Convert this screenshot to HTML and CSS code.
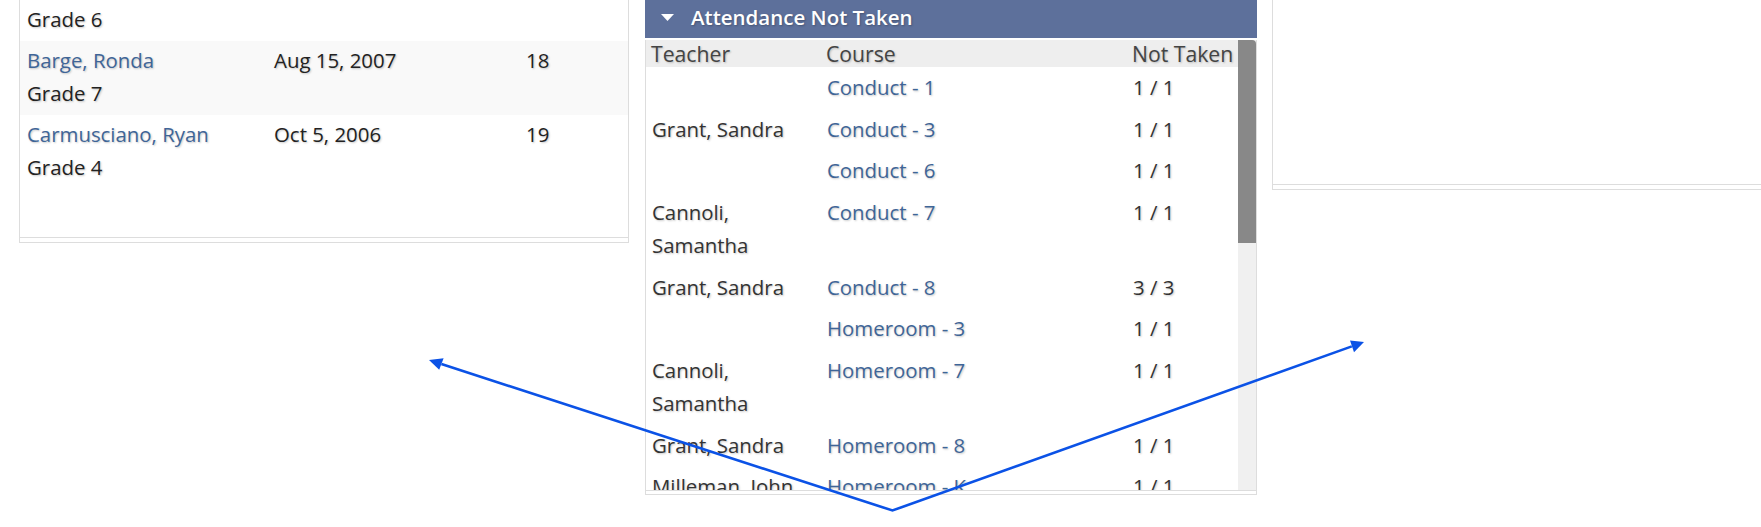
FILE: index.html
```html
<!DOCTYPE html>
<html lang="en">
<head>
<meta charset="utf-8">
<title>Dashboard</title>
<link rel="stylesheet" href="styles.css">
</head>
<body>
<div class="dashboard">
  <section class="panel panel-students">
    <div class="panel-body students-body">
      <table class="list students">
        <colgroup><col class="c-name"><col class="c-date"><col class="c-num"></colgroup>
        <tbody>
          <tr><td><div class="sub">Grade 6</div></td><td></td><td></td></tr>
          <tr class="alt"><td><a href="#" class="link">Barge, Ronda</a><div class="sub">Grade 7</div></td><td>Aug 15, 2007</td><td>18</td></tr>
          <tr><td><a href="#" class="link">Carmusciano, Ryan</a><div class="sub">Grade 4</div></td><td>Oct 5, 2006</td><td>19</td></tr>
        </tbody>
      </table>
    </div>
  </section>

  <section class="panel panel-attendance">
    <header class="panel-head">
      <svg class="caret" width="13" height="7" viewBox="0 0 13 7"><path d="M0 0H13L6.5 7Z" fill="#fff"/></svg>
      <h2 class="panel-title">Attendance Not Taken</h2>
    </header>
    <div class="attendance-frame">
      <div class="scroll-area">
        <div class="scroll-content">
          <table class="list attendance">
            <colgroup><col class="a-teacher"><col class="a-course"><col class="a-count"></colgroup>
            <thead>
              <tr><th>Teacher</th><th>Course</th><th>Not Taken</th></tr>
            </thead>
            <tbody>
              <tr><td></td><td><a href="#" class="link">Conduct - 1</a></td><td>1 / 1</td></tr>
              <tr><td>Grant, Sandra</td><td><a href="#" class="link">Conduct - 3</a></td><td>1 / 1</td></tr>
              <tr><td></td><td><a href="#" class="link">Conduct - 6</a></td><td>1 / 1</td></tr>
              <tr><td>Cannoli, Samantha</td><td><a href="#" class="link">Conduct - 7</a></td><td>1 / 1</td></tr>
              <tr><td>Grant, Sandra</td><td><a href="#" class="link">Conduct - 8</a></td><td>3 / 3</td></tr>
              <tr><td></td><td><a href="#" class="link">Homeroom - 3</a></td><td>1 / 1</td></tr>
              <tr><td>Cannoli, Samantha</td><td><a href="#" class="link">Homeroom - 7</a></td><td>1 / 1</td></tr>
              <tr><td>Grant, Sandra</td><td><a href="#" class="link">Homeroom - 8</a></td><td>1 / 1</td></tr>
              <tr><td>Milleman, John</td><td><a href="#" class="link">Homeroom - K</a></td><td>1 / 1</td></tr>
            </tbody>
          </table>
        </div>
        <div class="scrollbar"><div class="scroll-thumb"></div></div>
      </div>
    </div>
  </section>

  <section class="panel panel-empty">
    <div class="panel-body empty-body"></div>
  </section>
</div>

<svg class="annotations" width="1761" height="527" viewBox="0 0 1761 527">
  <polyline points="441.4,364.0 892.5,510.5 1351.8,346.4" fill="none" stroke="#0b52e6" stroke-width="2.6" stroke-linejoin="miter"/>
  <polygon points="429,360 443.6,358.3 439.2,369.7" fill="#0b52e6"/>
  <polygon points="1364,342 1350,340.6 1354,352.2" fill="#0b52e6"/>
</svg>
</body>
</html>
```

FILE: styles.css
```css
html, body {
  margin: 0;
  padding: 0;
}

body {
  width: 1761px;
  height: 527px;
  overflow: hidden;
  position: relative;
  background: #ffffff;
  font-family: "Open Sans", "Noto Sans", sans-serif;
  font-size: 20.4px;
  color: #222222;
}

.dashboard {
  display: flex;
  align-items: flex-start;
  padding-left: 19px;
}

.panel {
  box-sizing: border-box;
  flex: none;
  background: #fff;
}

/* ---------- left panel ---------- */
.panel-students {
  width: 610px;
  border: 1px solid #dddddd;
  border-top: none;
  padding-bottom: 4px;
}

.students-body {
  height: 237px;
  border-bottom: 1px solid #dddddd;
}

.list {
  border-collapse: collapse;
  table-layout: fixed;
  width: 100%;
}

.list td,
.list th {
  text-align: left;
  vertical-align: top;
  line-height: 33.5px;
  text-shadow: 1px 1px 2px rgba(0, 0, 0, 0.22);
}

.students td {
  padding: 3px 7px 4px;
}

.students .c-name { width: 247px; }
.students .c-date { width: 252px; }
.students .c-num { width: auto; }

.students tr.alt td {
  background: #f9f9f9;
}

.link {
  color: #3f6597;
  text-decoration: none;
}

.sub {
  color: #222222;
}

/* ---------- middle panel ---------- */
.panel-attendance {
  width: 612px;
  margin-left: 16px;
}

.panel-head {
  box-sizing: border-box;
  height: 38px;
  padding: 0 0 4px 16px;
  background: #5d709b;
  display: flex;
  align-items: center;
  gap: 17px;
}

.caret {
  display: block;
  flex: none;
}

.panel-title {
  margin: 0;
  font-size: 20.5px;
  font-weight: 600;
  line-height: 34px;
  color: #ffffff;
  text-shadow: 1px 1px 2px rgba(0, 0, 0, 0.25);
}

.attendance-frame {
  margin-top: 2px;
  border: 1px solid #dddddd;
  border-top: none;
  padding-bottom: 3px;
}

.scroll-area {
  height: 450px;
  display: flex;
  overflow: hidden;
  border-bottom: 1px solid #dddddd;
}

.scroll-content {
  width: 592px;
  flex: none;
  overflow: hidden;
}

.attendance .a-teacher { width: 175px; }
.attendance .a-course { width: 306px; }
.attendance .a-count { width: auto; }

.attendance th {
  background: #eeeeee;
  color: #444444;
  font-size: 21.2px;
  font-weight: 400;
  line-height: 27px;
  padding: 0 5px;
  white-space: nowrap;
}

.attendance td {
  padding: 4px 5px 4px 6px;
  color: #333333;
}

.scrollbar {
  width: 18px;
  flex: none;
  background: #f0f0f0;
}

.scroll-thumb {
  height: 203px;
  background: #888888;
  border-top-right-radius: 4px;
}

/* ---------- right panel ---------- */
.panel-empty {
  width: 520px;
  margin-left: 15px;
  border: 1px solid #dddddd;
  border-top: none;
  padding-bottom: 4px;
}

.empty-body {
  height: 184px;
  border-bottom: 1px solid #dddddd;
}

/* ---------- annotation overlay ---------- */
.annotations {
  position: absolute;
  left: 0;
  top: 0;
  pointer-events: none;
}
```
